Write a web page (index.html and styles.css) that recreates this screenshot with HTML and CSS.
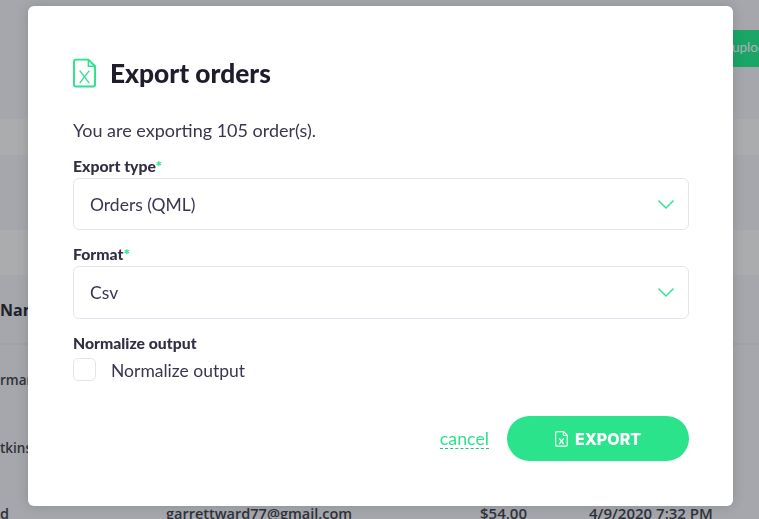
FILE: index.html
```html
<!DOCTYPE html>
<html lang="en">
<head>
    <meta charset="UTF-8">
    <meta name="viewport" content="width=device-width, initial-scale=1.0">
    <title>Export orders</title>
    <link rel="stylesheet" href="styles.css">
</head>
<body>
    <div class="page">
        <div class="topbar"><span class="upload-btn">uploa</span></div>
        <div class="band band-one"></div>
        <div class="gap"></div>
        <div class="band band-two"></div>
        <div class="table-head">Name</div>
        <div class="table-row">rman</div>
        <div class="table-row">tkins</div>
        <div class="table-row last-row">
            <span class="cell-name">d</span>
            <span class="cell-email">garrettward77@gmail.com</span>
            <span class="cell-total">$54.00</span>
            <span class="cell-date">4/9/2020 7:32 PM</span>
        </div>
    </div>

    <div class="overlay"></div>

    <div class="modal">
        <div class="modal-header">
            <svg class="file-icon" viewBox="0 0 24 30" fill="none" stroke="#2be38b" stroke-width="2">
                <path d="M3 1H16L23 8V27a2 2 0 0 1-2 2H3a2 2 0 0 1-2-2V3a2 2 0 0 1 2-2Z" stroke-linejoin="round"/>
                <path d="M16 1V8H23" stroke-width="1.5"/>
                <path d="M7 12.5L17 25.5M17 12.5L7 25.5" stroke-width="1.4"/>
            </svg>
            <h2>Export orders</h2>
        </div>
        <p class="intro">You are exporting 105 order(s).</p>

        <label class="field-label">Export type<span class="req">*</span></label>
        <div class="select-box">
            <span>Orders (QML)</span>
            <svg class="chevron" viewBox="0 0 16 9" fill="none" stroke="#2be38b" stroke-width="1.4"><path d="M0.5 0.5L8 8L15.5 0.5"/></svg>
        </div>

        <label class="field-label">Format<span class="req">*</span></label>
        <div class="select-box format-select">
            <span>Csv</span>
            <svg class="chevron" viewBox="0 0 16 9" fill="none" stroke="#2be38b" stroke-width="1.4"><path d="M0.5 0.5L8 8L15.5 0.5"/></svg>
        </div>

        <label class="field-label">Normalize output</label>
        <div class="check-row">
            <span class="checkbox"></span>
            <span class="check-text">Normalize output</span>
        </div>

        <div class="modal-actions">
            <a class="cancel-link">cancel</a>
            <button class="export-btn">
                <svg class="btn-icon" viewBox="0 0 12 15" fill="none" stroke="#fff" stroke-width="1.1">
                    <path d="M1.5 0.6H8L11.4 4V13.2a1 1 0 0 1-1 1H1.5a1 1 0 0 1-1-1V1.6a1 1 0 0 1 1-1Z"/>
                    <path d="M7.8 0.6V4.2H11.4" stroke-width="0.9"/>
                    <path d="M4 7L8 12.2M8 7L4 12.2" stroke-width="1.2"/>
                </svg>
                EXPORT
            </button>
        </div>
    </div>
</body>
</html>
```

FILE: styles.css
```css
html, body {
    margin: 0;
    padding: 0;
    height: 100%;
    overflow: hidden;
}
body {
    font-family: 'Lato', 'Noto Sans', sans-serif;
    color: #3b3650;
    background: #eff0f3;
}
.page {
    height: 519px;
    overflow: hidden;
    font-family: 'Open Sans', sans-serif;
    font-size: 13.5px;
    font-weight: 600;
    color: #3a3c46;
}
.topbar {
    height: 119px;
    padding-top: 30px;
    box-sizing: border-box;
    display: flex;
    justify-content: flex-end;
}
.upload-btn {
    height: 37px;
    width: 60px;
    box-sizing: border-box;
    padding: 9px 0 0 4px;
    margin-right: -29px;
    background: #1bed87;
    color: #fff;
    font-family: 'Lato', sans-serif;
    font-weight: 400;
    font-size: 13.5px;
}
.band {
    background: #f8f8f6;
}
.band-one {
    height: 36px;
}
.gap {
    height: 75px;
}
.band-two {
    height: 45px;
}
.table-head {
    height: 70px;
    line-height: 70px;
    font-weight: 700;
    font-size: 16px;
    color: #23222c;
    border-bottom: 2px solid #e8e8e4;
    box-sizing: border-box;
}
.table-row {
    height: 68px;
    line-height: 70px;
}
.last-row {
    display: flex;
    font-size: 14.5px;
    line-height: 65px;
}
.cell-name {
    width: 166px;
}
.cell-email {
    width: 314px;
}
.cell-total {
    width: 109px;
    font-size: 15px;
}
.cell-date {
    font-size: 15px;
}
.overlay {
    position: fixed;
    top: 0;
    left: 0;
    width: 100%;
    height: 100%;
    background-color: rgba(30, 32, 40, 0.35);
}
.modal {
    position: absolute;
    top: 6px;
    left: 28px;
    width: 705px;
    height: 500px;
    box-sizing: border-box;
    padding: 49px 44px 0 45px;
    background: #fff;
    border-radius: 6px;
    box-shadow: 0 0 12px rgba(30, 32, 40, 0.18);
}
.modal-header {
    display: flex;
    align-items: center;
    gap: 14px;
    height: 36px;
}
.file-icon {
    width: 23px;
    height: 30px;
}
.modal-header h2 {
    margin: 0;
    font-size: 26.3px;
    font-weight: 900;
    color: #1f1d2b;
}
.intro {
    margin: 27px 0 0;
    font-size: 18px;
    line-height: 24px;
}
.field-label {
    display: block;
    margin-top: 14px;
    font-size: 15.75px;
    line-height: 20px;
    font-weight: 900;
    color: #332e42;
}
.req {
    color: #2be38b;
}
.select-box {
    display: flex;
    justify-content: space-between;
    align-items: center;
    height: 52px;
    box-sizing: border-box;
    margin-top: 2px;
    padding: 0 14px 0 16px;
    border: 1px solid #e4e4ee;
    border-radius: 6px;
    font-size: 17.5px;
}
.format-select {
    height: 53px;
}
.chevron {
    width: 16px;
    height: 9px;
}
.check-row {
    display: flex;
    align-items: center;
    gap: 15px;
    margin-top: 5px;
    font-size: 17.5px;
}
.check-text {
    padding-top: 1px;
}
.checkbox {
    width: 21px;
    height: 21px;
    border: 1px solid #e4e4ee;
    border-radius: 5px;
}
.modal-actions {
    display: flex;
    justify-content: flex-end;
    align-items: center;
    gap: 18px;
    margin-top: 35px;
}
.cancel-link {
    margin-bottom: 1px;
    color: #2be38b;
    font-size: 17.8px;
    line-height: 20px;
    border-bottom: 1px dashed #2bbf7c;
}
.export-btn {
    display: flex;
    align-items: center;
    justify-content: center;
    gap: 7px;
    width: 182px;
    height: 45px;
    border: none;
    border-radius: 23px;
    background: #2be38b;
    color: #fff;
    font-family: 'Inter', sans-serif;
    font-size: 16px;
    font-weight: 800;
}
.btn-icon {
    width: 13px;
    height: 16px;
}
```
